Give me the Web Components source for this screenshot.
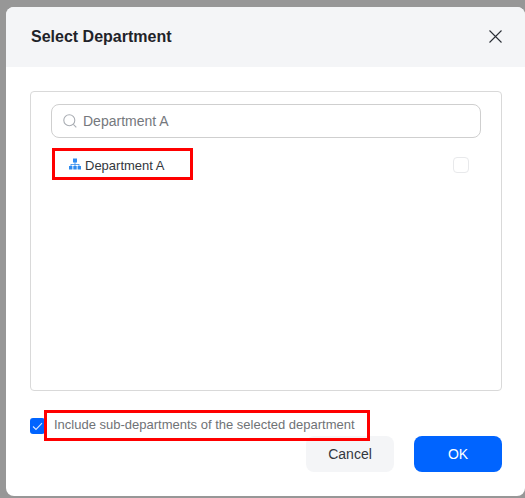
<!DOCTYPE html>
<html>
<head>
<meta charset="utf-8">
<style>
    html, body { margin: 0; height: 100%; overflow: hidden; }
    body { background: #979797; font-family: "Liberation Sans", Arial, sans-serif; }
</style>
</head>
<body>
<dept-dialog heading="Select Department">
    <search-box value="Department A"></search-box>
    <dept-row>Department A</dept-row>
    <span slot="option">Include sub-departments of the selected department</span>
    <ui-button slot="actions">Cancel</ui-button>
    <ui-button slot="actions" primary>OK</ui-button>
</dept-dialog>
<script>
class DeptDialog extends HTMLElement {
    constructor() {
        super();
        this.attachShadow({ mode: 'open' });
        this.shadowRoot.innerHTML = `
            <style>
                :host { display: flex; flex-direction: column; box-sizing: border-box; position: relative; width: 519px; height: 489px; margin: 7px 0 0 6px; background: #fff; border-radius: 8px; }
                header { display: flex; align-items: center; justify-content: space-between; flex: none; height: 60px; padding: 0 23px 0 25px; background: #f4f5f7; border-radius: 8px 8px 0 0; }
                h2 { margin: 0; font-size: 16px; font-weight: bold; color: #1f2329; }
                header svg { display: block; margin-top: -1px; }
                .panel { box-sizing: border-box; flex: none; width: 472px; height: 300px; margin: 24px 0 0 24px; padding: 12px 20px 0; border: 1px solid #d9d9d9; border-radius: 4px; }
                .option { display: flex; align-items: center; gap: 9px; margin: 27px 0 0 24px; height: 16px; font-size: 13px; line-height: 14px; color: #6f7276; }
                .option slot { display: block; margin-top: -3px; }
                .check { display: flex; align-items: center; justify-content: center; flex: none; width: 15px; height: 16px; background: #0064ff; border-radius: 3px; }
                .actions { display: flex; justify-content: flex-end; gap: 20px; margin: 2px 23px 0 0; }
                .mark { position: absolute; box-sizing: border-box; border: 3px solid #ff0000; pointer-events: none; }
                .mark.a { left: 46px; top: 141px; width: 141px; height: 32px; }
                .mark.b { left: 38px; top: 403px; width: 326px; height: 31px; }
            </style>
            <header>
                <h2>${this.getAttribute('heading')}</h2>
                <svg width="13" height="13" viewBox="0 0 13 13" fill="none" stroke="#2b2f36" stroke-width="1.1"><path d="M.5.5l12 12M12.5.5l-12 12"/></svg>
            </header>
            <div class="panel"><slot></slot></div>
            <div class="option">
                <span class="check"><svg width="11" height="9" viewBox="0 0 11 9" fill="none" stroke="#fff" stroke-width="1.1" opacity=".85"><path d="M1 4.5l3 3L10 1.2"/></svg></span>
                <slot name="option"></slot>
            </div>
            <div class="actions"><slot name="actions"></slot></div>
            <div class="mark a"></div>
            <div class="mark b"></div>
        `;
    }
}

class SearchBox extends HTMLElement {
    constructor() {
        super();
        this.attachShadow({ mode: 'open' });
        this.shadowRoot.innerHTML = `
            <style>
                :host { display: flex; align-items: center; gap: 6px; box-sizing: border-box; height: 34px; padding: 0 11px; border: 1px solid #cfcfcf; border-radius: 8px; font-size: 14px; color: #75787d; }
                svg { display: block; flex: none; }
            </style>
            <svg width="14" height="14" viewBox="0 0 14 14" fill="none" stroke-width="1.1">
                <circle cx="6.3" cy="6.3" r="5.5" stroke="#a9adb3"/>
                <path d="M10.3 10.3l3 3" stroke="#a9adb3"/>
            </svg>
            <span>${this.getAttribute('value')}</span>
        `;
    }
}

class DeptRow extends HTMLElement {
    constructor() {
        super();
        this.attachShadow({ mode: 'open' });
        this.shadowRoot.innerHTML = `
            <style>
                :host { display: flex; align-items: center; box-sizing: border-box; height: 32px; margin-top: 11px; padding: 0 12px 0 18px; font-size: 13px; color: #33373d; }
                svg { display: block; flex: none; margin-right: 4px; margin-top: -2px; }
                .label { flex: 1; }
                .box { box-sizing: border-box; width: 16px; height: 16px; border: 1px solid #e8e9eb; border-radius: 4px; margin-top: -1px; }
            </style>
            <svg width="12" height="12" viewBox="0 0 12 12" fill="#2f8cf0">
                <rect x="4" y="0.5" width="4" height="4"/>
                <rect x="0" y="8" width="3.4" height="3.5"/>
                <rect x="4.3" y="8" width="3.4" height="3.5"/>
                <rect x="8.6" y="8" width="3.4" height="3.5"/>
                <path d="M5.6 4h.8v2h4v2h-.8V6.8H6.4V8h-.8V6.8H2.4V8h-.8V6h4z"/>
            </svg>
            <span class="label"><slot></slot></span>
            <span class="box"></span>
        `;
    }
}

class UiButton extends HTMLElement {
    constructor() {
        super();
        this.attachShadow({ mode: 'open' });
        this.shadowRoot.innerHTML = `
            <style>
                :host { display: flex; align-items: center; justify-content: center; box-sizing: border-box; width: 88px; height: 36px; border-radius: 8px; font-size: 14px; background: #f4f5f7; color: #33373d; }
                :host([primary]) { background: #0064ff; color: #fff; }
            </style>
            <slot></slot>
        `;
    }
}

customElements.define('dept-dialog', DeptDialog);
customElements.define('search-box', SearchBox);
customElements.define('dept-row', DeptRow);
customElements.define('ui-button', UiButton);
</script>
</body>
</html>
